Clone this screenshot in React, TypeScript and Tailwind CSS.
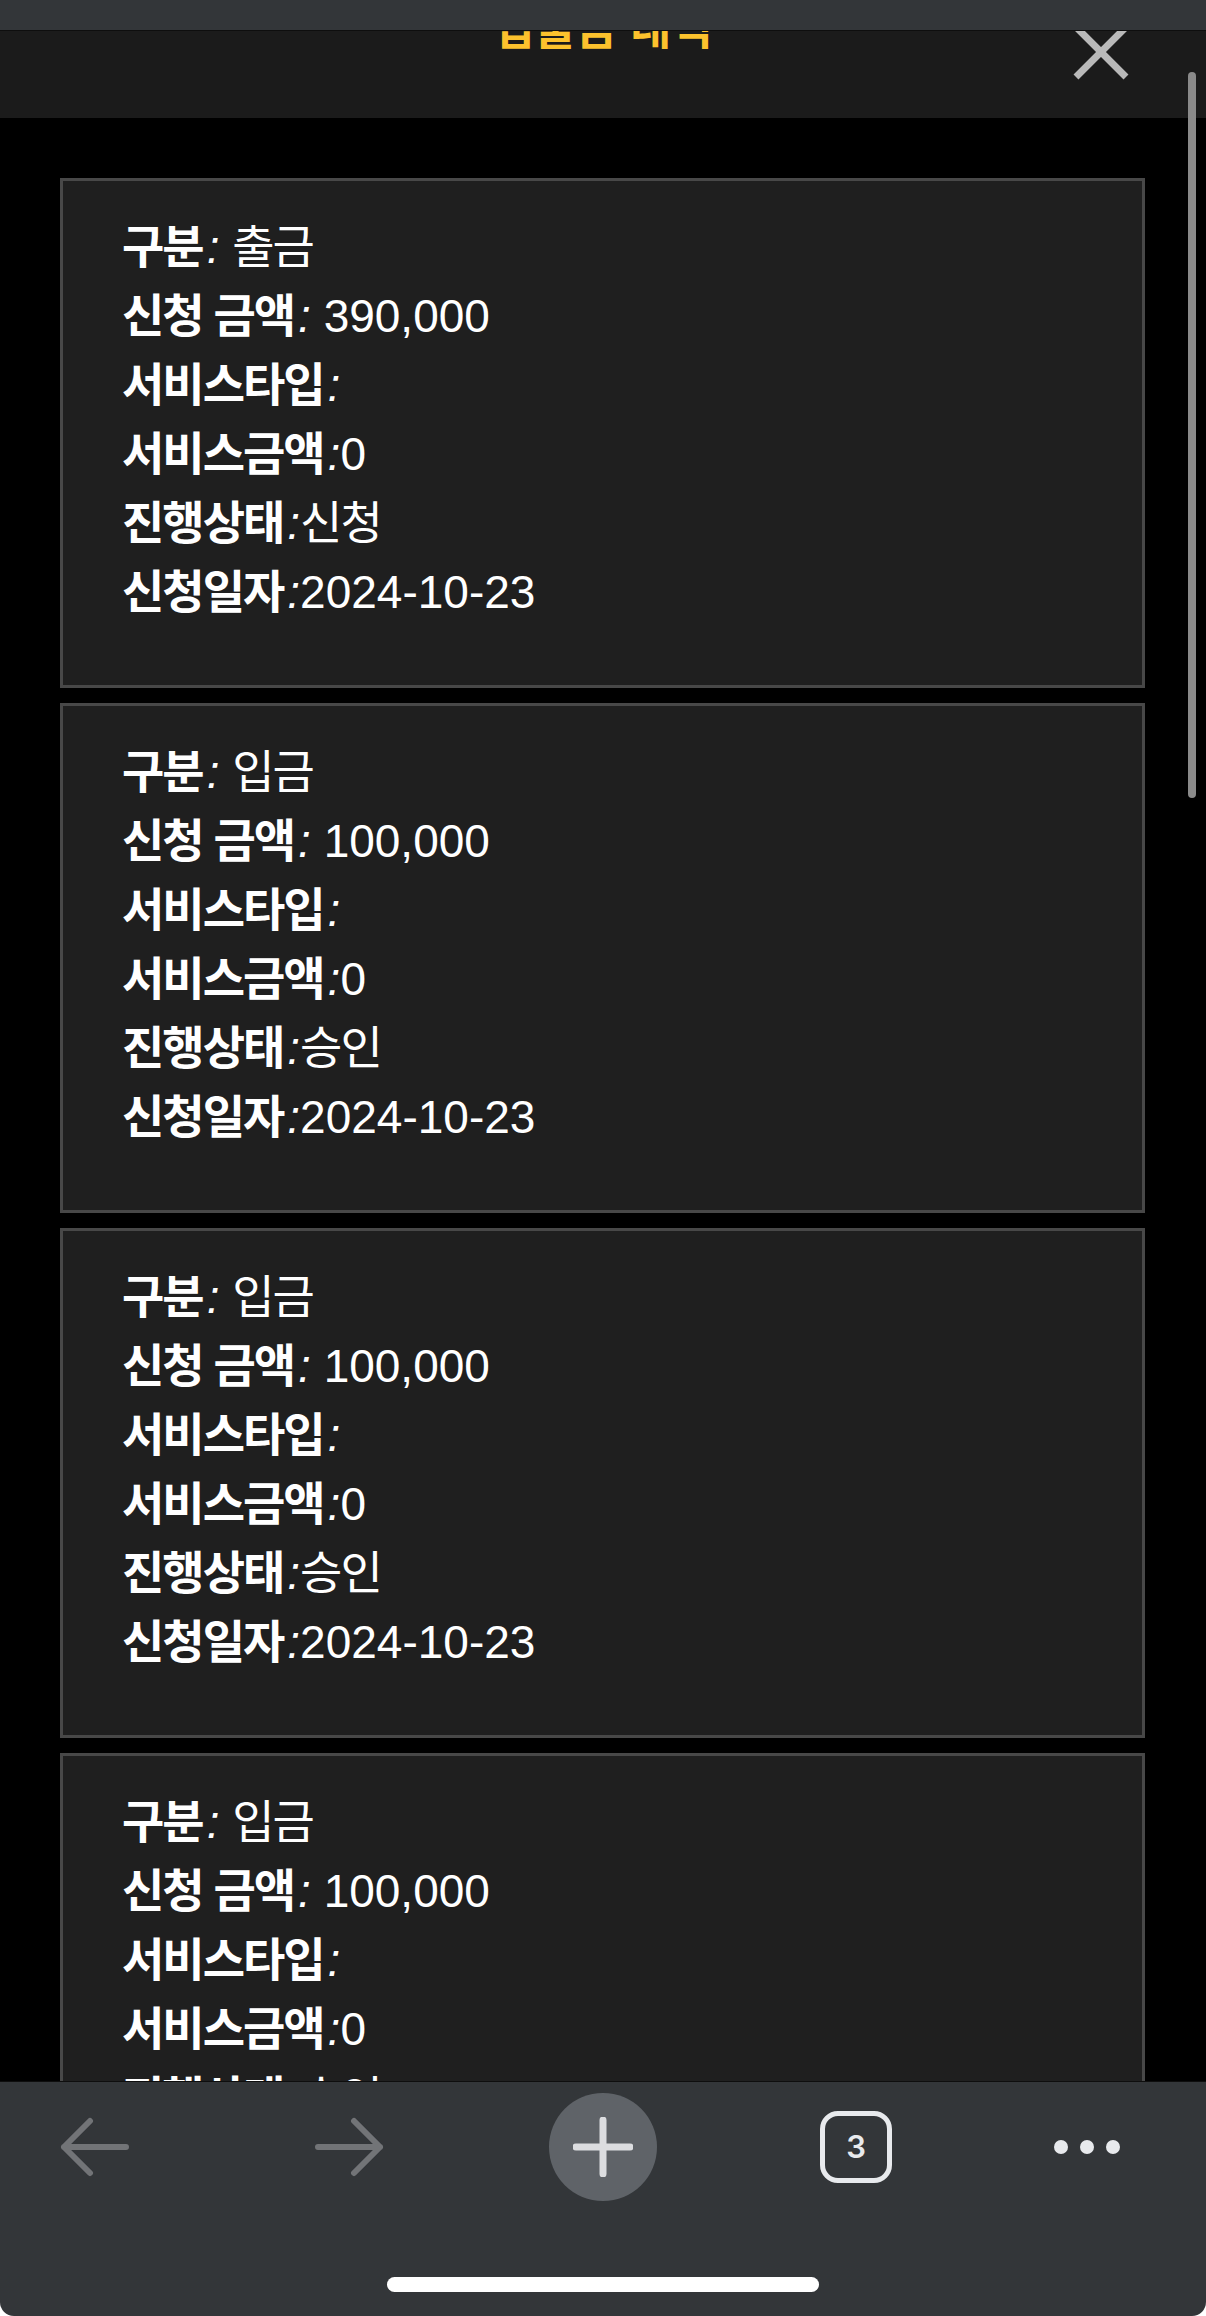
const records = [
  { type: "출금", amount: "390,000", status: "신청", date: "2024-10-23" },
  { type: "입금", amount: "100,000", status: "승인", date: "2024-10-23" },
  { type: "입금", amount: "100,000", status: "승인", date: "2024-10-23" },
  { type: "입금", amount: "100,000", status: "승인", date: "2024-10-23" },
];

function Row({ label, value, spaced, ko }: { label: string; value: string; spaced?: boolean; ko?: boolean }) {
  return (
    <div className="h-[69px] whitespace-nowrap leading-[69px]">
      <span className="font-bold tracking-[-2px]">{label}</span>
      <span className="ml-[4px] italic">:</span>
      {spaced ? " " : ""}
      <span className={ko ? "tracking-[-2px]" : ""}>{value}</span>
    </div>
  );
}

function RecordCard({ r }: { r: (typeof records)[number] }) {
  return (
    <div className="h-[510px] shrink-0 border-[3px] border-[#484848] bg-[#1f1f1f] pl-[59px] pt-[32px] text-[46px] text-white">
      <Row label="구분" value={r.type} spaced ko />
      <Row label="신청 금액" value={r.amount} spaced />
      <Row label="서비스타입" value="" />
      <Row label="서비스금액" value="0" />
      <Row label="진행상태" value={r.status} ko />
      <Row label="신청일자" value={r.date} />
    </div>
  );
}

export default function App() {
  return (
    <div className="relative flex h-[2316px] w-[1206px] flex-col overflow-hidden bg-white font-['Liberation_Sans','Noto_Sans_CJK_KR',sans-serif]">
      {/* browser top chrome */}
      <div className="h-[31px] shrink-0 border-b border-[#0e0e0e] bg-[#333639]" />

      {/* modal header */}
      <div className="grid h-[87px] shrink-0 grid-cols-[1fr_auto_1fr] items-start overflow-hidden bg-[#1b1b1b]">
        <div />
        <div className="-mt-[24px] text-[45px] font-bold leading-[46px] text-[#fcc22d]">입출금 내역</div>
        <div className="flex justify-end pr-[75px]">
          <svg width="60" height="60" viewBox="0 0 60 60" className="-mt-[9px]">
            <path d="M5 5 L55 55 M55 5 L5 55" stroke="#b9b9b9" strokeWidth="7" fill="none" />
          </svg>
        </div>
      </div>

      {/* list */}
      <div className="flex min-h-0 flex-1 flex-col gap-[15px] overflow-hidden bg-black pl-[60px] pr-[61px] pt-[60px]">
        {records.map((r, i) => (
          <RecordCard key={i} r={r} />
        ))}
      </div>

      {/* scrollbar */}
      <div className="absolute left-[1188px] top-[72px] h-[726px] w-[8px] rounded-full bg-[#8a8a8a]" />

      {/* browser bottom toolbar */}
      <div className="h-[235px] shrink-0 rounded-b-[14px] border-t border-[#0e0e0e] bg-[#333639] pt-[11px]">
        <div className="flex h-[108px] items-center">
          <svg width="70" height="60" viewBox="0 0 70 60" className="ml-[60px]">
            <path d="M66 30 H4 M30 4 L4 30 L30 56" stroke="#727477" strokeWidth="6" strokeLinecap="round" strokeLinejoin="round" fill="none" />
          </svg>
          <svg width="70" height="60" viewBox="0 0 70 60" className="ml-[184px]">
            <path d="M4 30 H66 M40 4 L66 30 L40 56" stroke="#727477" strokeWidth="6" strokeLinecap="round" strokeLinejoin="round" fill="none" />
          </svg>
          <div className="ml-[165px] flex h-[108px] w-[108px] items-center justify-center rounded-full bg-[#5f6368]">
            <svg width="60" height="60" viewBox="0 0 60 60">
              <path d="M30 3 V57 M3 30 H57" stroke="#dcdde0" strokeWidth="7" strokeLinecap="round" fill="none" />
            </svg>
          </div>
          <div className="ml-[163px] flex h-[72px] w-[72px] items-center justify-center rounded-[18px] border-[5px] border-[#e8eaed] font-['Inter',sans-serif] text-[31px] font-semibold text-[#e8eaed]">
            3
          </div>
          <div className="ml-[162px] flex items-center gap-[12px]">
            <span className="h-[14px] w-[14px] rounded-full bg-[#e8eaed]" />
            <span className="h-[14px] w-[14px] rounded-full bg-[#e8eaed]" />
            <span className="h-[14px] w-[14px] rounded-full bg-[#e8eaed]" />
          </div>
        </div>
        <div className="mx-auto mt-[76px] h-[15px] w-[432px] rounded-full bg-white" />
      </div>
    </div>
  );
}
